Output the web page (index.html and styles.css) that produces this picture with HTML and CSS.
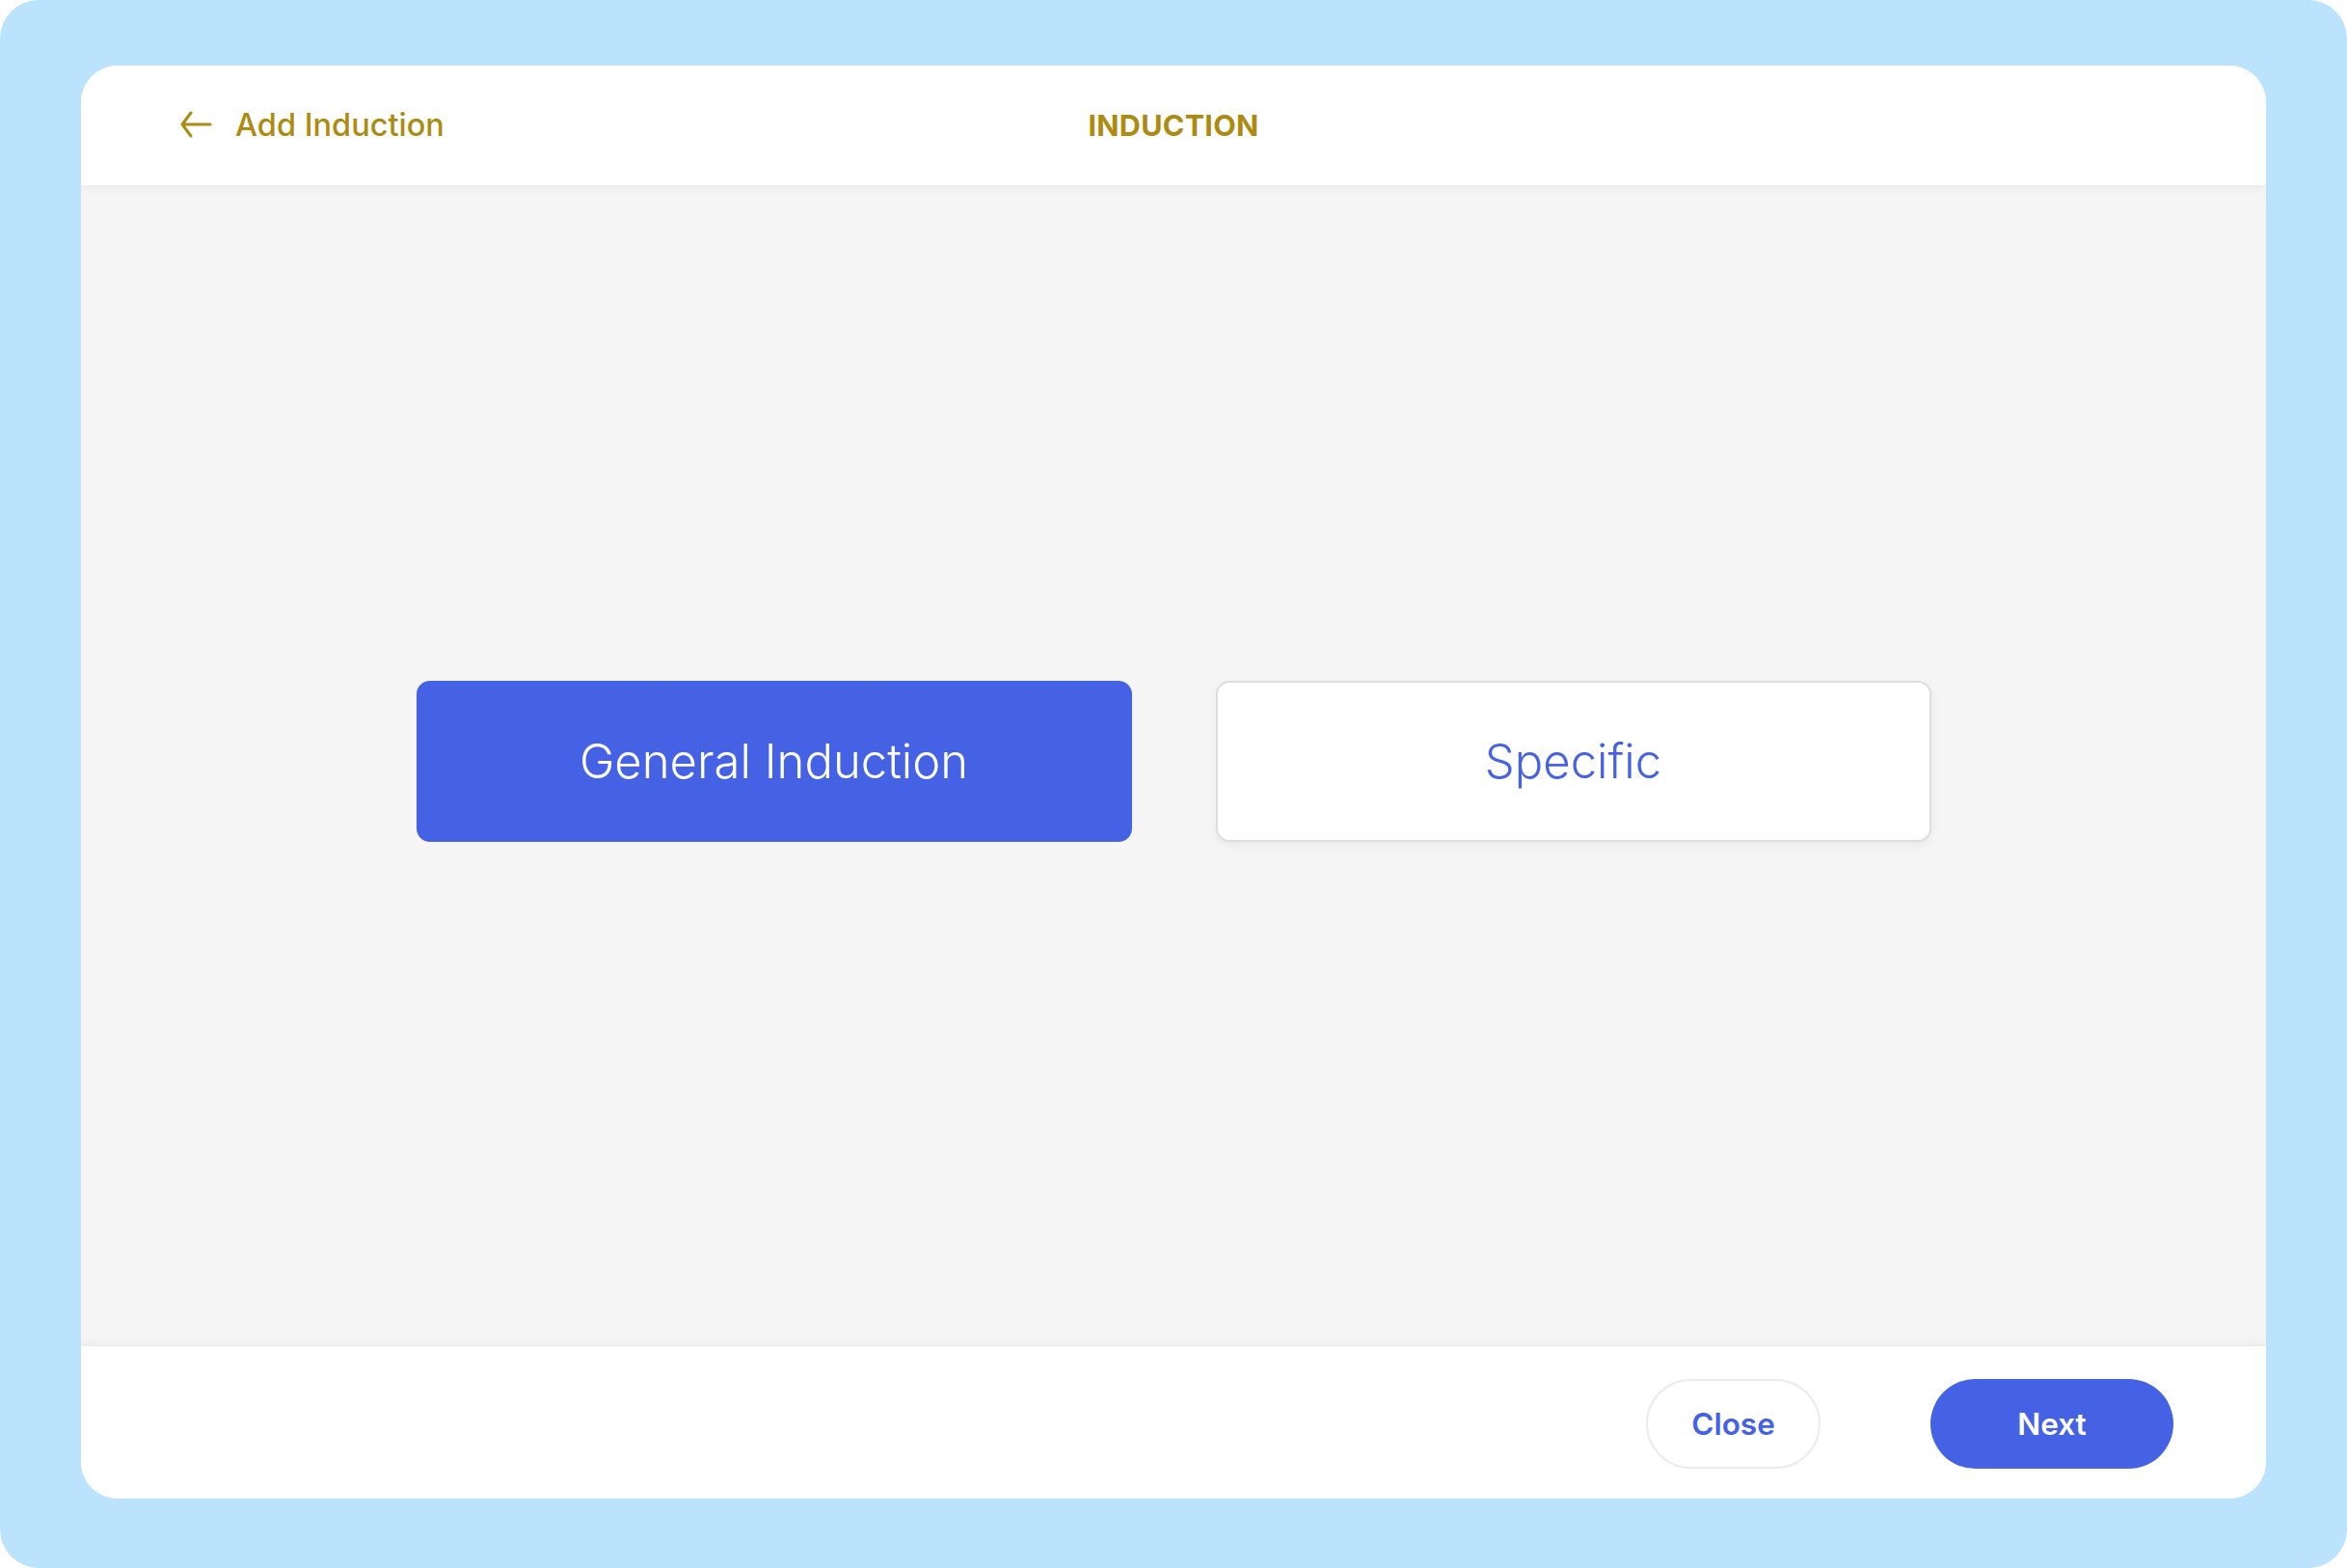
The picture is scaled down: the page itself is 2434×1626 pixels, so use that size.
FILE: index.html
```html
<!DOCTYPE html>
<html lang="en">
<head>
<meta charset="utf-8">
<title>Induction</title>
<link rel="stylesheet" href="styles.css">
</head>
<body>
<div class="frame">
  <div class="card">
    <header class="header">
      <a class="back" href="#">
        <svg class="back-icon" viewBox="0 0 34 28" width="34" height="28" aria-hidden="true">
          <path d="M32 14H3M12 2L3 14l9 12" fill="none" stroke="currentColor" stroke-width="3" stroke-linecap="round" stroke-linejoin="round"/>
        </svg>
        <span>Add Induction</span>
      </a>
      <h1 class="title">INDUCTION</h1>
      <div class="spacer"></div>
    </header>
    <main class="body">
      <div class="choices">
        <button class="choice choice-active">General Induction</button>
        <button class="choice">Specific</button>
      </div>
    </main>
    <footer class="footer">
      <button class="btn btn-outline">Close</button>
      <button class="btn btn-primary">Next</button>
    </footer>
  </div>
</div>
</body>
</html>
```

FILE: styles.css
```css
* { box-sizing: border-box; }
html, body { margin: 0; padding: 0; background: #ffffff; }
body { font-family: "Inter", "Roboto", sans-serif; }

.frame {
  height: 1626px;
  background: #bce3fe;
  border-radius: 40px;
  padding: 68px 84px 72px;
}

.card {
  height: 100%;
  background: #ffffff;
  border-radius: 38px;
  overflow: hidden;
  display: flex;
  flex-direction: column;
}

.header {
  position: relative;
  z-index: 2;
  height: 124px;
  flex: none;
  display: grid;
  grid-template-columns: 1fr auto 1fr;
  align-items: center;
  padding: 0 102px 2px;
  background: #ffffff;
  box-shadow: 0 3px 10px rgba(0, 0, 0, 0.05);
}

.back {
  display: flex;
  align-items: center;
  gap: 24px;
  color: #ad8b10;
  text-decoration: none;
  font-size: 32.5px;
  font-weight: 500;
}
.back-icon { display: block; }

.title {
  margin: 0;
  color: #ad8b10;
  font-size: 30.5px;
  font-weight: 700;
  letter-spacing: 0.3px;
}

.body {
  flex: 1;
  background: #f5f5f5;
  display: flex;
  align-items: center;
  justify-content: center;
  padding-bottom: 10px;
}

.choices {
  display: flex;
  gap: 87px;
}

.choice {
  width: 742px;
  height: 167px;
  border-radius: 14px;
  border: 2px solid #dedede;
  background: #ffffff;
  color: #4561e4;
  font-family: "Inter", "Roboto", sans-serif;
  font-size: 49px;
  font-weight: 300;
  box-shadow: 0 3px 10px rgba(0, 0, 0, 0.06);
  cursor: pointer;
}
.choice-active {
  background: #4561e4;
  border-color: #4561e4;
  color: #ffffff;
  box-shadow: none;
}

.footer {
  position: relative;
  z-index: 2;
  height: 158px;
  flex: none;
  background: #ffffff;
  display: flex;
  align-items: center;
  justify-content: flex-end;
  gap: 114px;
  padding: 2px 96px 0 0;
  box-shadow: 0 -3px 8px rgba(0, 0, 0, 0.05);
}

.btn {
  height: 93px;
  border-radius: 47px;
  font-family: "Inter", "Roboto", sans-serif;
  font-size: 31.5px;
  font-weight: 600;
  cursor: pointer;
}
.btn-outline {
  width: 181px;
  background: #ffffff;
  border: 2px solid #ececec;
  color: #4561e4;
}
.btn-primary {
  width: 252px;
  background: #4561e4;
  border: none;
  color: #ffffff;
}
```
